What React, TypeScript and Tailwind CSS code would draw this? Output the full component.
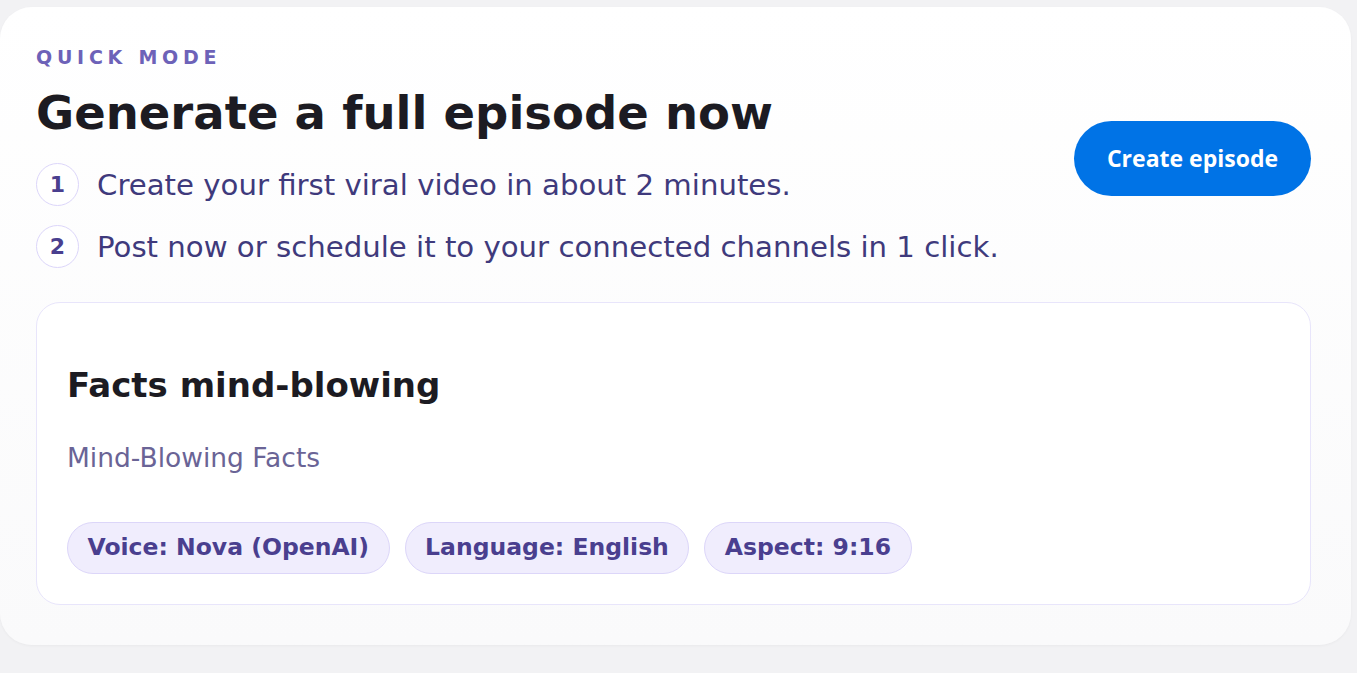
const steps = [
  "Create your first viral video in about 2 minutes.",
  "Post now or schedule it to your connected channels in 1 click.",
];

const chips = ["Voice: Nova (OpenAI)", "Language: English", "Aspect: 9:16"];

export default function App() {
  return (
    <div className="min-h-screen w-full bg-[#f2f2f4] pt-[7px] font-['DejaVu_Sans',sans-serif]">
      <div className="w-[1351px] h-[638px] rounded-[32px] bg-gradient-to-b from-white to-[#fafafb] shadow-[0_1px_3px_rgba(0,0,0,0.04)] pl-[36px] pr-[40px] pt-[36px]">
        <div className="flex items-center justify-between">
          <div>
            <div className="text-[19px] leading-[28px] font-bold uppercase tracking-[0.25em] text-[#6d62b8]">
              Quick mode
            </div>
            <h1 className="mt-[14px] text-[46.5px] leading-[56px] font-bold text-[#1c1b22]">
              Generate a full episode now
            </h1>
            <ul className="mt-[22px] flex flex-col gap-[19px]">
              {steps.map((s, i) => (
                <li key={i} className="flex items-center gap-[18px]">
                  <span className="flex h-[43px] w-[43px] items-center justify-center rounded-full border border-[#dcd6fa] bg-white text-[22px] font-bold text-[#4a3f8f]">
                    {i + 1}
                  </span>
                  <span className="text-[29.2px] leading-[36px] text-[#3f3a7c]">{s}</span>
                </li>
              ))}
            </ul>
          </div>
          <button className="mt-[6px] h-[75px] w-[237px] rounded-full bg-[#0073e6] text-[23px] font-bold text-white font-['Open_Sans',sans-serif]">
            Create episode
          </button>
        </div>

        <div className="mt-[34px] rounded-[24px] border border-[#e8e5fb] bg-white px-[30px] pt-[62px] pb-[30px]">
          <h2 className="text-[34px] leading-[40px] font-bold text-[#1c1b22]">Facts mind-blowing</h2>
          <p className="mt-[36px] text-[26.5px] leading-[34px] text-[#6a6496]">Mind-Blowing Facts</p>
          <div className="mt-[47px] flex gap-[15px]">
            {chips.map((c) => (
              <span
                key={c}
                className="flex h-[52px] items-center rounded-full border border-[#dcd6f9] bg-[#f0edfd] px-[19.5px] text-[23.5px] font-bold text-[#4a3f8f]"
              >
                {c}
              </span>
            ))}
          </div>
        </div>
      </div>
    </div>
  );
}
